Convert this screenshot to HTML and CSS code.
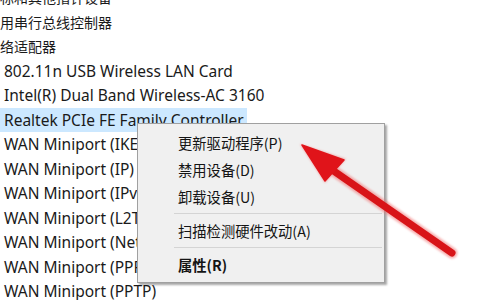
FILE: index.html
```html
<!DOCTYPE html>
<html lang="zh-CN">
<head>
<meta charset="utf-8">
<link rel="stylesheet" href="styles.css">
</head>
<body>
<div class="tree">
  <div class="row cat">标和其他指针设备</div>
  <div class="row cat">用串行总线控制器</div>
  <div class="row cat">络适配器</div>
  <div class="row item">802.11n USB Wireless LAN Card</div>
  <div class="row item">Intel(R) Dual Band Wireless-AC 3160</div>
  <div class="row item"><span class="sel">Realtek PCIe FE Family Controller</span></div>
  <div class="row item">WAN Miniport (IKEv2)</div>
  <div class="row item">WAN Miniport (IP)</div>
  <div class="row item">WAN Miniport (IPv6)</div>
  <div class="row item">WAN Miniport (L2TP)</div>
  <div class="row item">WAN Miniport (Network Monitor)</div>
  <div class="row item">WAN Miniport (PPPOE)</div>
  <div class="row item">WAN Miniport (PPTP)</div>
</div>

<div class="menu">
  <div class="mi">更新驱动程序(P)</div>
  <div class="mi">禁用设备(D)</div>
  <div class="mi">卸载设备(U)</div>
  <div class="sep"></div>
  <div class="mi">扫描检测硬件改动(A)</div>
  <div class="sep"></div>
  <div class="mi bold">属性(R)</div>
</div>

<svg class="arrow" width="480" height="300" viewBox="0 0 480 300">
  <defs>
    <filter id="glow" x="-20%" y="-20%" width="140%" height="140%">
      <feGaussianBlur stdDeviation="1.2"/>
    </filter>
  </defs>
  <g filter="url(#glow)" opacity="0.55">
    <line x1="452" y1="253" x2="325" y2="165" stroke="#f07070" stroke-width="11" stroke-linecap="round"/>
    <polygon points="300,144 346,159 325,183" fill="#f07070"/>
  </g>
  <line x1="452" y1="253" x2="328" y2="167" stroke="#d81418" stroke-width="7" stroke-linecap="round"/>
  <polygon points="302,145 344,160 325,181" fill="#e0141a" stroke="#e0141a" stroke-width="1.5" stroke-linejoin="round"/>
</svg>
</body>
</html>
```

FILE: styles.css
```css
html, body {
  margin: 0;
  padding: 0;
  background: #ffffff;
}
body {
  width: 480px;
  height: 300px;
  overflow: hidden;
  position: relative;
  font-family: "Noto Sans", "Noto Sans CJK SC", sans-serif;
  color: #1a1a1a;
}
.tree {
  display: flex;
  flex-direction: column;
  margin-top: -15px;
}
.row {
  height: 24.5px;
  line-height: 24.5px;
  font-size: 15.5px;
  white-space: nowrap;
}
.cat {
  padding-left: 0;
  font-family: "Noto Sans CJK SC", sans-serif;
  font-size: 14px;
}
.item {
  padding-left: 4px;
}
.sel {
  display: inline-block;
  background: #cce8ff;
  margin-left: -4px;
  padding: 0 3px 0 4px;
}
.menu {
  position: absolute;
  left: 137px;
  top: 123px;
  width: 244px;
  padding: 5px 2px 4px 0;
  background: #f0f0f0;
  border: 1px solid #a0a0a0;
  box-shadow: 2px 2px 2px rgba(0, 0, 0, 0.35);
  font-family: "Noto Sans CJK SC", sans-serif;
  font-size: 14.3px;
  color: #141414;
}
.mi {
  height: 27px;
  line-height: 27px;
  padding-left: 40px;
}
.bold {
  font-weight: bold;
}
.sep {
  height: 1px;
  background: #d4d4d4;
  margin: 3px 0 3px 36px;
}
.arrow {
  position: absolute;
  left: 0;
  top: 0;
  pointer-events: none;
}
```
